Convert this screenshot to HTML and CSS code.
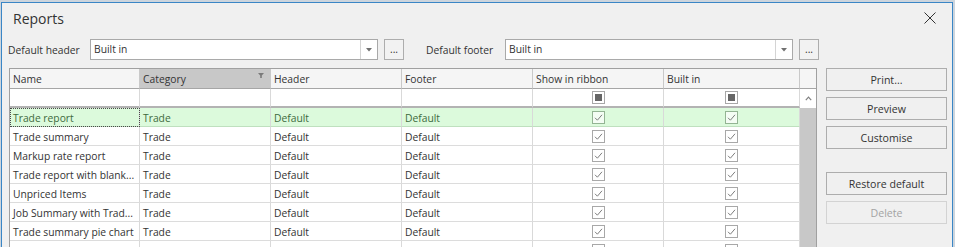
FILE: index.html
```html
<!DOCTYPE html>
<html lang="en">
<head>
    <meta charset="UTF-8">
    <title>Reports</title>
    <link rel="stylesheet" href="styles.css">
</head>
<body>
    <div class="window">
        <div class="titlebar">
            <h1 class="title">Reports</h1>
            <svg class="close" width="12" height="12" viewBox="0 0 12 12"><path d="M0.5 0.5 L11.5 11.5 M11.5 0.5 L0.5 11.5" stroke="#333" stroke-width="1" fill="none"/></svg>
        </div>

        <div class="defaults">
            <label class="field-label">Default header</label>
            <div class="combo">
                <span class="combo-text">Built in</span>
                <span class="combo-arrow"><svg width="6" height="4" viewBox="0 0 6 4"><path d="M0 0 H6 L3 3.5 Z" fill="#707070"/></svg></span>
            </div>
            <button class="dots">...</button>

            <label class="field-label footer-label">Default footer</label>
            <div class="combo">
                <span class="combo-text">Built in</span>
                <span class="combo-arrow"><svg width="6" height="4" viewBox="0 0 6 4"><path d="M0 0 H6 L3 3.5 Z" fill="#707070"/></svg></span>
            </div>
            <button class="dots">...</button>
        </div>

        <div class="main">
            <div class="grid-frame">
                <div class="grid">
                    <div class="grid-row head">
                        <div class="cell">Name</div>
                        <div class="cell sorted">Category
                            <svg class="funnel" width="6" height="5" viewBox="0 0 6 5"><path d="M0 0 H6 L3.8 2.4 V5 H2.2 V2.4 Z" fill="#7a7a7a"/></svg>
                        </div>
                        <div class="cell">Header</div>
                        <div class="cell">Footer</div>
                        <div class="cell">Show in ribbon</div>
                        <div class="cell">Built in</div>
                    </div>
                    <div class="grid-row filter">
                        <div class="cell"></div>
                        <div class="cell"></div>
                        <div class="cell"></div>
                        <div class="cell"></div>
                        <div class="cell center"><span class="check partial"></span></div>
                        <div class="cell center"><span class="check partial"></span></div>
                    </div>
                    <div id="rows"></div>
                </div>
                <div class="scrollbar">
                    <div class="scroll-head"></div>
                    <div class="scroll-up"><svg width="7" height="5" viewBox="0 0 7 5"><path d="M0.8 4.2 L3.5 1.2 L6.2 4.2" stroke="#808080" stroke-width="1.2" fill="none"/></svg></div>
                    <div class="scroll-thumb"></div>
                </div>
            </div>

            <div class="actions">
                <button class="btn">Print...</button>
                <button class="btn">Preview</button>
                <button class="btn">Customise</button>
                <button class="btn spaced">Restore default</button>
                <button class="btn" disabled>Delete</button>
            </div>
        </div>
    </div>

    <script>
        const reports = [
            "Trade report",
            "Trade summary",
            "Markup rate report",
            "Trade report with blank...",
            "Unpriced Items",
            "Job Summary with Trad...",
            "Trade summary pie chart",
            "Trade summary by job"
        ];

        const tick = '<svg width="11" height="11" viewBox="0 0 11 11"><path d="M2 5.8 L4.4 8.2 L9 2.8" stroke="#7d7d7d" stroke-width="1" fill="none"/></svg>';

        const rows = document.getElementById('rows');
        reports.forEach((name, i) => {
            const row = document.createElement('div');
            row.className = 'grid-row' + (i === 0 ? ' selected' : '');
            row.innerHTML =
                `<div class="cell${i === 0 ? ' focused' : ''}">${name}</div>` +
                '<div class="cell">Trade</div>' +
                '<div class="cell">Default</div>' +
                '<div class="cell">Default</div>' +
                `<div class="cell center"><span class="check">${tick}</span></div>` +
                `<div class="cell center"><span class="check">${tick}</span></div>`;
            rows.appendChild(row);
        });
    </script>
</body>
</html>
```

FILE: styles.css
```css
body {
    margin: 0;
    height: 247px;
    overflow: hidden;
    background: #cdd5dd;
    font-family: "Open Sans", sans-serif;
    font-size: 10.3px;
    color: #333;
}

.window {
    margin: 2px 2px 0 1px;
    height: 260px;
    border: 1px solid #3a86c6;
    border-bottom: none;
    background: #f0f0f0;
}

.titlebar {
    display: flex;
    justify-content: space-between;
    align-items: flex-start;
    height: 36px;
    padding: 6px 16px 0 11px;
    box-sizing: border-box;
}

.title {
    margin: 0;
    font-size: 14px;
    font-weight: normal;
    line-height: 19px;
    color: #333;
}

.close {
    margin-top: 3px;
}

.defaults {
    display: flex;
    align-items: center;
    height: 21px;
    padding-left: 6px;
    margin-bottom: 8px;
}

.field-label {
    width: 82px;
    flex-shrink: 0;
}

.footer-label {
    width: 79px;
    margin-left: 22px;
}

.combo {
    display: flex;
    width: 288px;
    height: 21px;
    box-sizing: border-box;
    border: 1px solid #a9a9a9;
    background: #fff;
}

.combo-text {
    flex: 1;
    padding-left: 3px;
    line-height: 19px;
}

.combo-arrow {
    width: 16px;
    border-left: 1px solid #d4d4d4;
    display: flex;
    align-items: center;
    justify-content: center;
}

.dots {
    width: 20px;
    height: 21px;
    margin-left: 6px;
    padding: 0;
    border: 1px solid #adadad;
    background: #f2f2f2;
    font-family: inherit;
    font-size: 10.3px;
    color: #333;
    line-height: 17px;
}

.main {
    display: flex;
    align-items: flex-start;
    gap: 9px;
    padding-left: 7px;
}

.grid-frame {
    display: flex;
    border: 1px solid #a0a0a0;
    border-bottom: none;
    background: #fff;
    height: 200px;
    overflow: hidden;
}

.grid {
    width: 790px;
}

.grid-row {
    display: grid;
    grid-template-columns: 130px 131px 131px 131px 131px 136px;
}

.cell {
    box-sizing: border-box;
    height: 19px;
    padding: 0 3px;
    border-right: 1px solid #d9d9d9;
    border-bottom: 1px solid #dcdcdc;
    line-height: 20px;
    white-space: nowrap;
    overflow: hidden;
}

.center {
    display: flex;
    align-items: center;
    justify-content: center;
}

.head .cell {
    height: 20px;
    line-height: 21px;
    background: #f5f5f5;
    border-right-color: #c9c9c9;
    border-bottom-color: #a6a6a6;
}

.head .sorted {
    display: flex;
    justify-content: space-between;
    background: #c8c8c8;
}

.funnel {
    margin: 4px 3px 0 0;
}

.filter .cell {
    border-bottom: 2px solid #b3b3b3;
}

.selected .cell {
    background: #dcfadc;
    color: #3e6a3e;
    border-bottom-color: #bfe0bf;
}

.focused {
    outline: 1px dotted #4a4a4a;
    outline-offset: -1px;
}

.check {
    display: flex;
    width: 13px;
    height: 13px;
    box-sizing: border-box;
    border: 1px solid #a8a8a8;
    background: #fff;
}

.selected .check {
    border-color: #93b493;
    background: #f4fdf4;
}

.check.partial::after {
    content: "";
    width: 7px;
    height: 7px;
    margin: 2px;
    background: #666;
}

.scrollbar {
    width: 16px;
    display: flex;
    flex-direction: column;
}

.scroll-head {
    height: 20px;
    box-sizing: border-box;
    background: #f5f5f5;
    border-bottom: 1px solid #a6a6a6;
}

.scroll-up {
    height: 19px;
    display: flex;
    align-items: center;
    justify-content: center;
    background: #fff;
}

.scroll-thumb {
    flex: 1;
    background: #c8c8c8;
}

.actions {
    display: flex;
    flex-direction: column;
    gap: 6px;
    width: 121px;
}

.btn {
    height: 23px;
    padding: 0;
    border: 1px solid #adadad;
    background: #f0f0f0;
    font-family: inherit;
    font-size: 10.6px;
    color: #333;
}

.btn.spaced {
    margin-top: 17px;
}

.btn:disabled {
    border-color: #d3d3d3;
    color: #a3a3a3;
}
```
